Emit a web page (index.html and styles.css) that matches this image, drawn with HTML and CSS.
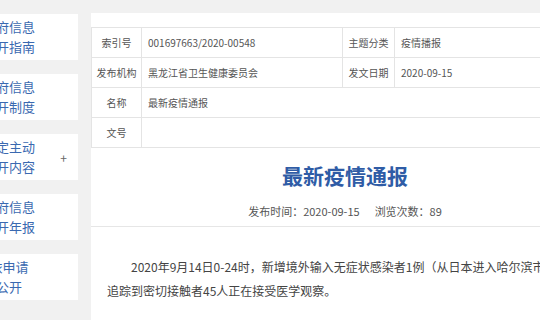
FILE: index.html
```html
<!DOCTYPE html>
<html lang="zh-CN">
<head>
  <meta charset="UTF-8" />
  <meta name="viewport" content="width=device-width, initial-scale=1.0"/>
  <title>最新疫情通报</title>
  <link rel="stylesheet" href="styles.css">
</head>
<body>
  <div class="page">
    <!-- 左侧栏目 -->
    <ul class="side-nav">
      <li class="side-item">政府信息<br>公开指南</li>
      <li class="side-item">政府信息<br>公开制度</li>
      <li class="side-item has-sub">法定主动<br>公开内容<span class="plus">+</span></li>
      <li class="side-item">政府信息<br>公开年报</li>
      <li class="side-item">依申请<br>公开</li>
    </ul>

    <div class="content">
      <table class="info-table">
        <colgroup>
          <col class="col-label">
          <col class="col-value">
          <col class="col-label2">
          <col>
        </colgroup>
        <tr>
          <td class="label">索引号</td>
          <td>001697663/2020-00548</td>
          <td class="label">主题分类</td>
          <td>疫情播报</td>
        </tr>
        <tr>
          <td class="label">发布机构</td>
          <td>黑龙江省卫生健康委员会</td>
          <td class="label">发文日期</td>
          <td>2020-09-15</td>
        </tr>
        <tr>
          <td class="label">名称</td>
          <td colspan="3">最新疫情通报</td>
        </tr>
        <tr>
          <td class="label">文号</td>
          <td colspan="3"></td>
        </tr>
      </table>

      <h1 class="title">最新疫情通报</h1>
      <p class="meta">发布时间：2020-09-15<span class="views">浏览次数：89</span></p>

      <div class="article">
        <p>2020年9月14日0-24时，新增境外输入无症状感染者1例（从日本进入哈尔滨市），追踪到密切接触者45人正在接受医学观察。</p>
      </div>
    </div>
  </div>
</body>
</html>
```

FILE: styles.css
```css
body {
  margin: 0;
  background-color: #f1f1f1;
  font-family: "Noto Sans CJK SC", "Noto Sans", sans-serif;
  overflow: hidden;
}

.page {
  display: flex;
  align-items: flex-start;
  gap: 13px;
  padding-top: 13px;
}

.side-nav {
  list-style: none;
  margin: 1px 0 0 -60px;
  padding: 0;
  width: 138px;
  flex-shrink: 0;
  display: flex;
  flex-direction: column;
  gap: 14px;
}

.side-item {
  position: relative;
  background: white;
  height: 46px;
  box-sizing: border-box;
  padding-top: 3px;
  font-size: 13px;
  line-height: 20px;
  color: #3a69b0;
  text-align: center;
}

.plus {
  position: absolute;
  right: 11px;
  top: 14px;
  font-size: 12px;
  color: #666;
}

.content {
  background: white;
  width: 508px;
  flex-shrink: 0;
  min-height: 340px;
  padding-top: 14px;
}

.info-table {
  width: 100%;
  border-collapse: collapse;
  table-layout: fixed;
  font-size: 10px;
  color: #555;
}

.col-label { width: 50px; }
.col-value { width: 201px; }
.col-label2 { width: 52px; }

.info-table td {
  border: 1px solid #e4e4e4;
  height: 29px;
  padding: 0 6px;
  vertical-align: middle;
  white-space: nowrap;
  overflow: hidden;
}

.info-table td.label {
  padding: 0;
  text-align: center;
}

.title {
  margin: 12px 0 0;
  font-size: 21px;
  line-height: 30px;
  font-weight: bold;
  color: #2f5ca6;
  text-align: center;
}

.meta {
  margin: 13px 0 0;
  font-size: 11px;
  line-height: 16px;
  color: #555;
  text-align: center;
}

.views {
  margin-left: 15px;
}

.article {
  margin-top: 7px;
  border-top: 1px solid #e6e6e6;
  padding: 28px 30px 0 16px;
}

.article p {
  margin: 0;
  font-size: 12px;
  line-height: 24px;
  color: #444;
  text-indent: 2em;
}
```
